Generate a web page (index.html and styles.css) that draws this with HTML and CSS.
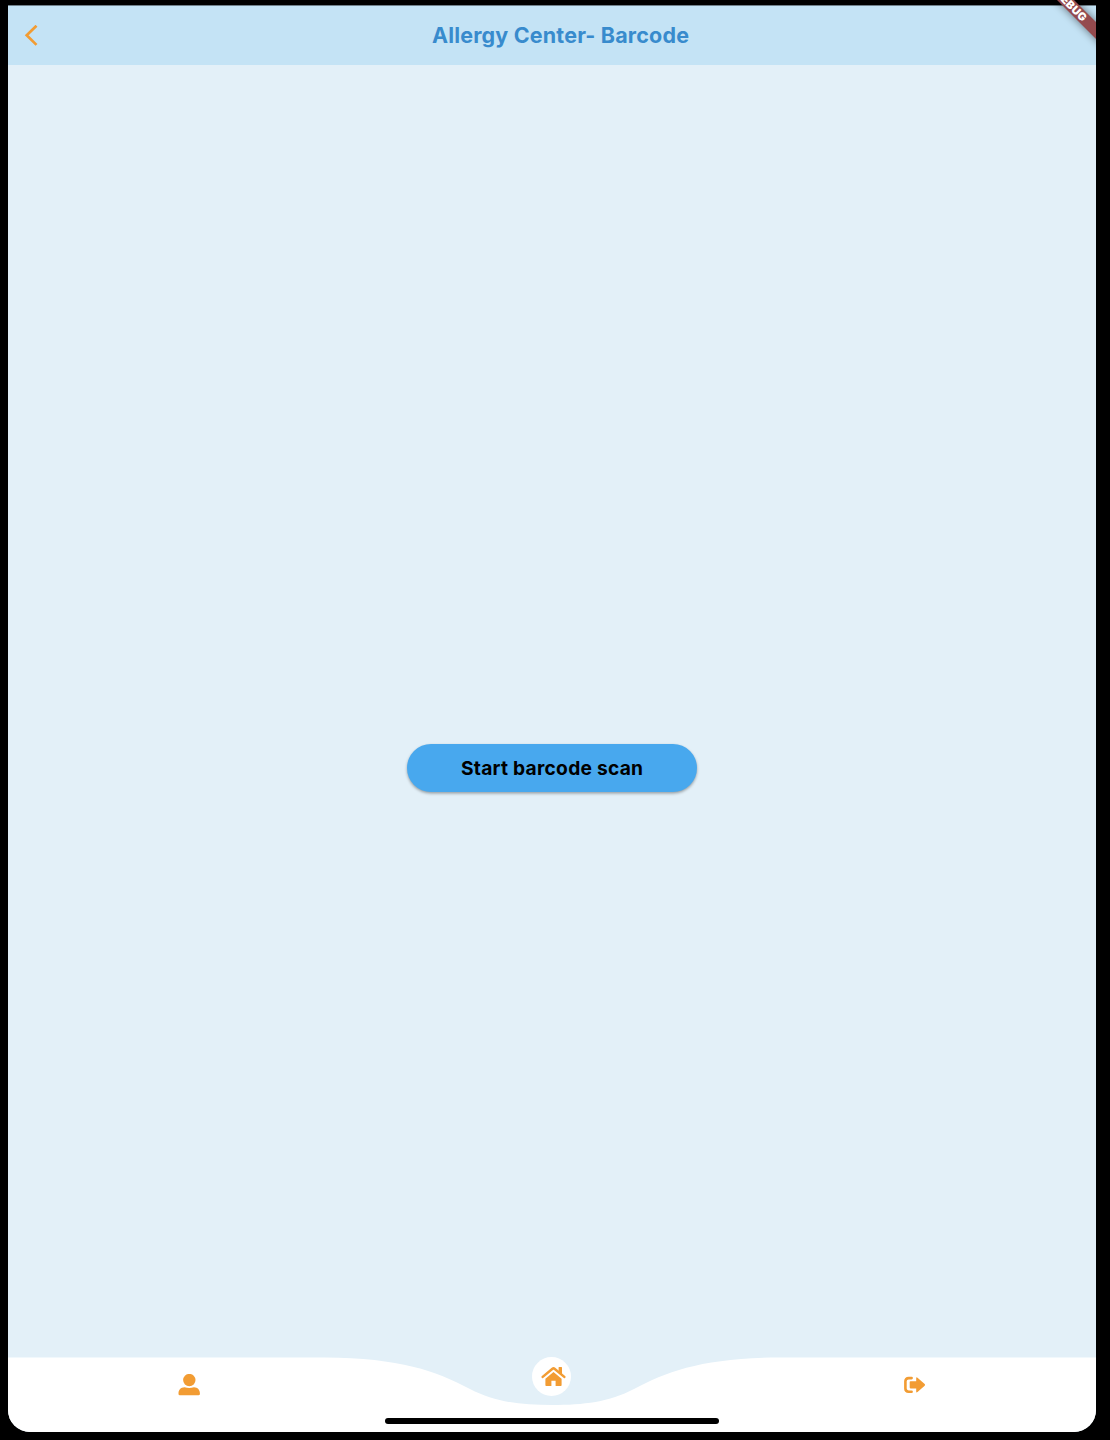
FILE: index.html
```html
<!DOCTYPE html>
<html lang="en">
<head>
<meta charset="utf-8">
<title>Allergy Center- Barcode</title>
<link rel="stylesheet" href="styles.css">
</head>
<body>
<div class="screen">
  <header class="app-bar">
    <button class="back" aria-label="Back">
      <svg width="14" height="22" viewBox="0 0 14 22"><path d="M12.500.7 2.700 10.300l9.800 9.600" fill="none" stroke="currentColor" stroke-width="2.700"/></svg>
    </button>
    <h1 class="title"><svg class="title-text" width="260" height="36"><text x="2" y="25" textLength="257">Allergy Center- Barcode</text></svg></h1>
  </header>
  <main class="content">
    <button class="scan"><svg width="184" height="30"><text x="1" y="22" textLength="182">Start barcode scan</text></svg></button>
  </main>
  <nav class="nav">
    <svg class="nav-shape" width="1088" height="75" viewBox="8 1357 1088 75"><path d="M8 1357.5H325C400 1358 436 1371 470 1389C495 1402 520 1405 552 1405S609 1402 634 1389C668 1371 704 1358 779 1357.5H1096V1432H8Z" fill="#fff"/></svg>
    <a class="nav-item">
      <svg width="22" height="22" viewBox="0 0 22 22" fill="currentColor"><circle cx="11.300" cy="6.100" r="6.200"/><path d="M6.500 13.200Q11.200 14.600 16 13.200C19.700 13.200 21.900 16 21.900 19.200V20Q21.900 21.300 20.500 21.300H1.900Q.5 21.300.5 20V19.200C.5 16 2.700 13.200 6.500 13.200Z"/></svg>
    </a>
    <a class="nav-item home">
      <span class="home-circle"><svg width="25" height="20" viewBox="0 0 25 20" fill="currentColor"><path d="M12.500 5 20.600 11.700V18.200Q20.600 19 19.800 19H14.600V13.800H10.400V19H5.200Q4.400 19 4.400 18.200V11.700Z"/><path d="M1.700 9.900 11.500 1.800Q12.500 1 13.500 1.800L23.300 9.900" fill="none" stroke="#fff" stroke-width="4.400"/><path d="M1.700 9.900 11.500 1.800Q12.500 1 13.500 1.800L23.300 9.900" fill="none" stroke="currentColor" stroke-width="2.500" stroke-linecap="round"/><path d="M17.600.5Q17.600 0 18.100 0H20.500Q21 0 21 .5V7.900L17.600 5Z"/></svg></span>
    </a>
    <a class="nav-item">
      <svg width="22" height="18" viewBox="0 0 22 18" fill="currentColor"><path d="M7.600 2.100H4.700Q1.400 2.100 1.400 5.200V12.600Q1.400 15.700 4.700 15.700H7.600" fill="none" stroke="currentColor" stroke-width="2.600" stroke-linecap="round"/><path d="M6.500 5.300H12.200V2.200Q12.200.7 13.500 1.700L20.700 8.100Q21.500 8.900 20.700 9.700L13.500 16.100Q12.200 17.100 12.200 15.600V12.400H6.500Q5.700 12.400 5.700 11.600V6.100Q5.700 5.300 6.500 5.300Z"/></svg>
    </a>
    <span class="home-indicator"></span>
  </nav>
</div>
<svg class="debug-banner" width="96" height="80" viewBox="1000 0 96 80">
  <g transform="translate(1071 5.500) rotate(45)"><rect class="ribbon" x="-60" y="-6" width="120" height="12"/><text x="0" y="3.900" text-anchor="middle" textLength="39">DEBUG</text></g>
</svg>
</body>
</html>
```
FILE: styles.css
```css
* { box-sizing: border-box; }
body {
  margin: 0;
  height: 1440px;
  padding: 5px 14px 8px 8px;
  background: #000;
  font-family: Inter, "Liberation Sans", sans-serif;
  overflow: hidden;
  position: relative;
}
button { border: 0; padding: 0; font: inherit; }
.screen {
  height: 1427px;
  display: flex;
  flex-direction: column;
  background: #e3f0f8;
  border-radius: 0 0 22px 22px;
  overflow: hidden;
}
.app-bar {
  height: 60px;
  flex: none;
  display: grid;
  grid-template-columns: 56px 1fr 40px;
  align-items: center;
  background: #c4e3f5;
  border-top: 1px solid #70818b;
}
.back {
  display: flex;
  padding-left: 16px;
  background: none;
  color: #f29c33;
}
.title {
  margin: 0;
  display: flex;
  justify-content: center;
  font-size: 21.5px;
  font-weight: 650;
}
.title-text { fill: #388bcd; }
.content {
  flex: 1;
  display: flex;
  align-items: flex-start;
  justify-content: center;
  padding-top: 679px;
}
.scan {
  width: 290px;
  height: 48px;
  display: flex;
  align-items: center;
  justify-content: center;
  border-radius: 24px;
  background: #48a8ee;
  box-shadow: 0 1.5px 3px rgba(0, 0, 0, .34);
  font-size: 19.2px;
  font-weight: 650;
}
.nav {
  position: relative;
  height: 75px;
  flex: none;
  display: grid;
  grid-template-columns: repeat(3, 1fr);
  color: #f29c33;
}
.nav-shape { position: absolute; inset: 0; }
.nav-item {
  position: relative;
  display: flex;
  justify-content: center;
  align-items: center;
  height: 56px;
}
.home { align-items: flex-start; }
.home-circle {
  width: 39px;
  height: 39px;
  display: flex;
  align-items: center;
  justify-content: center;
  padding-left: 3px;
  border-radius: 50%;
  background: #fff;
}
.home-indicator {
  position: absolute;
  left: 377px;
  top: 61px;
  width: 334px;
  height: 6px;
  border-radius: 3px;
  background: #000;
}
.debug-banner {
  position: absolute;
  left: 1000px;
  top: 0;
  font-size: 11px;
  font-weight: 900;
  fill: #fff;
}
.ribbon {
  fill: #944a4e;
  filter: drop-shadow(0 0 4px rgba(0, 0, 0, .5));
}
```
